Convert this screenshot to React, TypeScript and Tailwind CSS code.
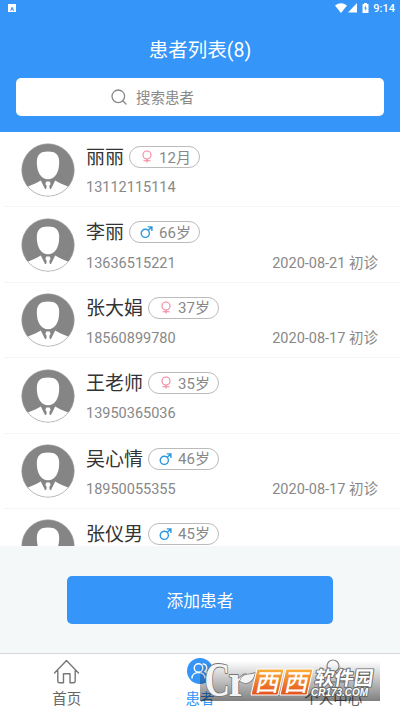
import React from 'react';

interface Patient {
  name: string;
  gender: 'female' | 'male';
  age: string;
  phone: string;
  visit?: string;
}

const patients: Patient[] = [
  { name: '丽丽', gender: 'female', age: '12月', phone: '13112115114' },
  { name: '李丽', gender: 'male', age: '66岁', phone: '13636515221', visit: '2020-08-21 初诊' },
  { name: '张大娟', gender: 'female', age: '37岁', phone: '18560899780', visit: '2020-08-17 初诊' },
  { name: '王老师', gender: 'female', age: '35岁', phone: '13950365036' },
  { name: '吴心情', gender: 'male', age: '46岁', phone: '18950055355', visit: '2020-08-17 初诊' },
  { name: '张仪男', gender: 'male', age: '45岁', phone: '' },
];

function Avatar() {
  return (
    <svg viewBox="0 0 54 54" className="mt-[10.5px] h-[54px] w-[54px] shrink-0">
      <defs>
        <clipPath id="avatar-clip">
          <circle cx="27" cy="27" r="26.3" />
        </clipPath>
      </defs>
      <g clipPath="url(#avatar-clip)">
        <rect width="54" height="54" fill="#858585" />
        <path d="M0 46C7 43.5 13 41.5 19.8 37.5L24 46H30L34.2 37.5C41 41.5 47 43.5 54 46V54H0Z" fill="#fff" />
        <path d="M25.2 38.5H28.8L29.6 41L28.3 43L29 47H25L25.7 43L24.4 41Z" fill="#fff" />
        <path d="M27 8.5C34.5 8.5 38.2 11.5 38.2 19C38.2 29.5 34 36.3 27 36.3C20 36.3 15.8 29.5 15.8 19C15.8 11.5 19.5 8.5 27 8.5Z" fill="#fff" />
      </g>
      <circle cx="27" cy="27" r="26.2" fill="none" stroke="#a0a0a0" strokeWidth=".6" />
    </svg>
  );
}

function GenderIcon({ gender }: { gender: Patient['gender'] }) {
  if (gender === 'female') {
    return (
      <svg viewBox="0 0 12 14" className="h-[14px] w-3" fill="none" stroke="#f5839d" strokeWidth="1.1">
        <circle cx="6" cy="5" r="4" />
        <path d="M6 9V12.5M2.5 10.8H9.5" />
      </svg>
    );
  }
  return (
    <svg viewBox="0 0 12 14" className="h-[14px] w-3 overflow-visible" fill="none" stroke="#2b98e0" strokeWidth="1.4">
      <circle cx="4.3" cy="8.3" r="4.1" />
      <path d="M7.2 5.4L10.8 1.8M6.8 1.9H10.9V6" />
    </svg>
  );
}

function PatientRow({ patient }: { patient: Patient }) {
  return (
    <div className="ml-1 flex h-[75.4px] shrink-0 border-b border-[#f5f5f5] pl-[17px]">
      <Avatar />
      <div className="ml-[11px] flex-1 pt-3">
        <div className="flex h-[26px] items-center">
          <span className="pt-[2px] text-[19px] leading-[26px] whitespace-nowrap text-[#333]">{patient.name}</span>
          <span className="ml-[5px] flex h-[22px] w-[71px] shrink-0 items-center rounded-full border border-[#bbb] pl-[11px]">
            <GenderIcon gender={patient.gender} />
            <span className="ml-[6px] pt-px text-[15px] leading-5 whitespace-nowrap text-[#888]">{patient.age}</span>
          </span>
        </div>
        <div className="mt-[7px] flex h-[22px] items-center justify-between pr-[22px] text-[14.5px] text-[#888]">
          <span>{patient.phone}</span>
          <span>{patient.visit}</span>
        </div>
      </div>
    </div>
  );
}

function StatusBar() {
  return (
    <div className="flex h-4 items-center justify-between pr-[5px] pl-2">
      <span className="flex h-2 w-2 items-center justify-center bg-white text-[6px] font-bold text-[#3595f8]">A</span>
      <div className="flex items-center">
        <svg viewBox="0 0 36 12" className="h-3 w-9" fill="#fff">
          <path d="M0 3.5Q6 -.8 12 3.5L6 11Z" />
          <path d="M22 1V10.5H13Z" />
          <path d="M27.5 2H29V1H32V2H33.5V11H27.5Z" />
          <path d="M30.8 3.2L29.2 6.5H30.3V9L31.9 5.8H30.8Z" fill="#3595f8" />
        </svg>
        <span className="ml-[2px] pt-px text-[11px] leading-4 font-medium text-white">9:14</span>
      </div>
    </div>
  );
}

// site stamp laid over the tab bar
function Watermark() {
  return (
    <div className="absolute top-[7px] left-[200px] h-10 w-[180px] bg-gradient-to-b from-black/0 to-black/50">
      <svg viewBox="0 0 180 40" className="h-10 w-[180px] overflow-visible">
        <defs>
          <linearGradient id="stamp-orange" x1="0" y1="0" x2="0" y2="1">
            <stop offset="0" stopColor="#fbb03b" />
            <stop offset="1" stopColor="#e4511b" />
          </linearGradient>
        </defs>
        <g fill="#f4f4f4" stroke="#777" strokeWidth="1.8" strokeLinejoin="round" paintOrder="stroke" fontFamily="'Liberation Serif', serif" fontWeight="bold">
          <text transform="translate(4.5 35) scale(.74 1)" fontSize="48">C</text>
          <text transform="translate(28.5 35) scale(.92 1)" fontSize="46">r</text>
          <path d="M40 20C43 11 49 15 55 12C53 20 48 25 40 20Z" strokeWidth="1.6" />
        </g>
        <path d="M57 8H84L78 34H51ZM86 8H113L107 34H80Z" fill="url(#stamp-orange)" stroke="#fff" strokeWidth="1" />
        <g fill="#fff" fontFamily="'Noto Sans CJK SC', sans-serif" fontWeight="500">
          <text transform="translate(54.5 30) skewX(-12)" fontSize="24">西</text>
          <text transform="translate(83.5 30) skewX(-12)" fontSize="24">西</text>
        </g>
        <g fill="#fff" stroke="#666" strokeWidth="1.8" strokeLinejoin="round" paintOrder="stroke">
          <text transform="translate(114 23.5) skewX(-8)" fontSize="19.5" fontFamily="'Noto Sans CJK SC', sans-serif" fontWeight="700">软件园</text>
          <text x="111" y="34.5" fontSize="11" fontFamily="'Liberation Sans', sans-serif" fontStyle="italic" fontWeight="bold" textLength="57" lengthAdjust="spacingAndGlyphs">CR173.COM</text>
        </g>
      </svg>
    </div>
  );
}

function TabBar() {
  return (
    <div className="relative grid h-[58px] shrink-0 grid-cols-3 border-t border-[#d5d8d8] bg-white text-[14.5px] text-[#666]">
      <div className="flex flex-col items-center pt-[5px]">
        <svg viewBox="0 0 28 26" className="h-[26px] w-7 shrink-0" fill="none" stroke="#777" strokeWidth="1.4" strokeLinejoin="round" strokeLinecap="round">
          <path d="M1.5 14L13.5 1.5L25.5 14M4.8 11.5V22C4.8 23.3 5.3 23.8 6.5 23.8H10.5V14.7H17V23.8H20.5C21.7 23.8 22.2 23.3 22.2 22V11.5" />
        </svg>
        <span className="mt-[5px] leading-5">首页</span>
      </div>
      <div className="flex flex-col items-center pt-1 text-[#3595f8]">
        <svg viewBox="0 0 26 26" className="h-[26px] w-[26px] shrink-0" fill="none" stroke="#fff" strokeWidth="1.4" strokeLinecap="round">
          <circle cx="13" cy="13" r="13" fill="#3595f8" stroke="none" />
          <circle cx="11.5" cy="10" r="4.2" />
          <path d="M5 20C5 16.5 8 14.5 11.5 14.5S18 16.5 18 20M16 6C20 6 21 11 18 13.5C20.5 14.5 21.5 16.5 21.5 18.5" />
        </svg>
        <span className="mt-[6px] leading-5">患者</span>
      </div>
      <div className="flex flex-col items-center pt-1">
        <svg viewBox="0 0 26 26" className="h-[26px] w-[26px] shrink-0" fill="none" stroke="#888" strokeWidth="1.2">
          <circle cx="13" cy="8" r="6" />
          <path d="M2 24C2 18 7 14 13 14S24 18 24 24Z" />
        </svg>
        <span className="mt-[6px] leading-5">个人中心</span>
      </div>
      <Watermark />
    </div>
  );
}

export default function App() {
  return (
    <div className="flex h-[711px] w-[400px] flex-col overflow-hidden bg-white font-[Roboto,'Noto_Sans_CJK_SC',sans-serif]">
      <header className="h-[132px] shrink-0 bg-[#3595f8]">
        <StatusBar />
        <h1 className="mt-5 text-center text-[19.5px] leading-[30px] text-white">患者列表(8)</h1>
        <div className="mx-4 mt-3 flex h-[38px] items-center rounded-[5px] bg-white pl-[95px] text-[14.5px] text-[#888]">
          <svg viewBox="0 0 16 16" className="h-4 w-4" fill="none" stroke="#888" strokeWidth="1.3" strokeLinecap="round">
            <circle cx="7.3" cy="7.3" r="6.3" />
            <path d="M12 12L15 15" />
          </svg>
          <span className="ml-[9px] pt-[3px]">搜索患者</span>
        </div>
      </header>
      <main className="flex h-[414px] shrink-0 flex-col overflow-hidden">
        {patients.map((patient) => (
          <PatientRow key={patient.name} patient={patient} />
        ))}
      </main>
      <div className="h-[107px] shrink-0 bg-[#f5f8f8] px-[67px] pt-[30px]">
        <button className="h-12 w-[266px] rounded-[5px] bg-[#3595f8] pt-[3px] text-[16.8px] text-white">添加患者</button>
      </div>
      <TabBar />
    </div>
  );
}
